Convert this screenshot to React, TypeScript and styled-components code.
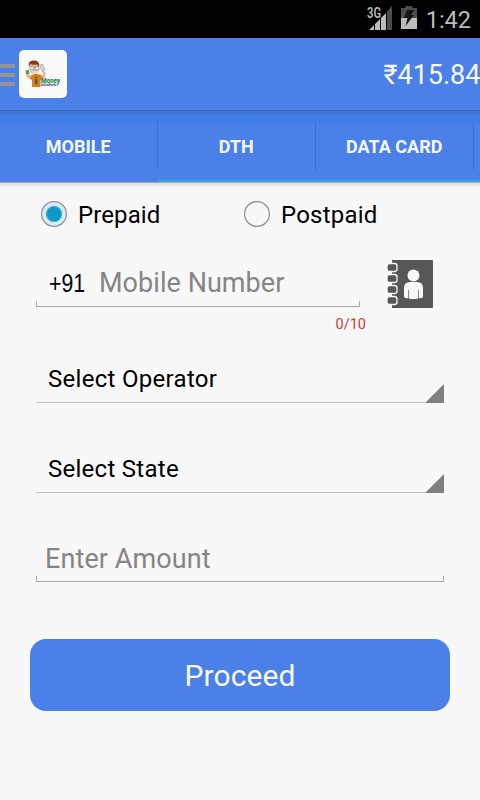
import React, { useState } from 'react';
import styled, { createGlobalStyle } from 'styled-components';

const BLUE = '#4a80e8';

const GlobalStyle = createGlobalStyle`
  * { box-sizing: border-box; }
  body { margin: 0; background: #f8f8f8; font-family: Roboto, "Noto Sans", sans-serif; }
  button { font-family: inherit; border: 0; padding: 0; background: none; text-align: left; }
`;

const Screen = styled.div`
  width: 480px;
  height: 800px;
  overflow: hidden;
  display: flex;
  flex-direction: column;
  background: #f8f8f8;
`;

const StatusBar = styled.header`
  height: 38px;
  flex: none;
  background: #000;
  display: flex;
  justify-content: flex-end;
  padding: 6px 9px 0 0;
`;

const StatusIcons = styled.svg`
  display: block;
  margin-right: 8px;
`;

const Label = styled.span<{ $size: number; $spacing?: number; $weight?: number; $color?: string }>`
  display: block;
  white-space: nowrap;
  line-height: 1.2;
  font-size: ${(p) => p.$size}px;
  letter-spacing: ${(p) => p.$spacing ?? 0}px;
  font-weight: ${(p) => p.$weight ?? 400};
  color: ${(p) => p.$color ?? '#000'};
`;

const AppBar = styled.div`
  height: 72px;
  flex: none;
  display: flex;
  align-items: center;
  background: ${BLUE};
`;

const Menu = styled.button`
  width: 15px;
  height: 22px;
  margin: 2px 4px 0 0;
  display: flex;
  flex-direction: column;
  justify-content: space-between;
`;

const MenuLine = styled.i`
  display: block;
  width: 15px;
  height: 4px;
  background: #969390;
`;

const LogoTile = styled.div`
  width: 48px;
  height: 48px;
  border-radius: 5px;
  background: #f9f9f9;
`;

const Balance = styled.div`
  width: 96.5px;
  margin-left: auto;
  padding-top: 3px;
`;

const Tabs = styled.nav`
  height: 72px;
  flex: none;
  display: flex;
  overflow: hidden;
  border-top: 1px solid #3767b6;
  background: linear-gradient(#4075cf 0, #427bdc 4px, #3f80e8 6px, #3f80e8 12px, ${BLUE} 13px);
`;

const Tab = styled.button<{ $active: boolean }>`
  width: 158px;
  flex: none;
  display: flex;
  align-items: center;
  justify-content: center;
  border-bottom: 2px solid ${(p) => (p.$active ? 'transparent' : '#33aadd')};
  background: linear-gradient(#3d70d0, #3d70d0) right 0 top 11px / 1px 48px no-repeat;
  padding: 2px 1.5px 0 0;
`;

const TabsShadow = styled.div`
  height: 5px;
  flex: none;
  background: linear-gradient(#a9abae 0, #a9abae 1px, #dedede 1px, #ededed 4px, #f3f3f3 5px);
`;

const Form = styled.form`
  display: flex;
  flex-direction: column;
  padding: 0 30px 0 36px;
`;

const Radios = styled.div`
  display: grid;
  grid-template-columns: 203px 1fr;
  height: 28px;
  margin: 13px 0 0 4px;
`;

const Radio = styled.button`
  display: flex;
  align-items: flex-start;
`;

const RadioMark = styled.svg`
  margin-right: 10px;
`;

const RadioText = styled.span`
  padding-top: 1px;
`;

const MobileRow = styled.div`
  display: flex;
  margin-top: 28px;
`;

const Field = styled.div<{ $width: number; $left: number; $top: number }>`
  width: ${(p) => p.$width}px;
  height: 51px;
  padding: ${(p) => p.$top}px 0 0 ${(p) => p.$left}px;
  display: flex;
  background:
    linear-gradient(#aaa, #aaa) left bottom / 1px 6px no-repeat,
    linear-gradient(#aaa, #aaa) right bottom / 1px 6px no-repeat,
    linear-gradient(#aaa, #aaa) left bottom / 100% 1px no-repeat;
`;

const Prefix = styled.span`
  width: 50px;
  flex: none;
  font: 25px/32px "Liberation Sans", Arial, sans-serif;
  color: #000;
  transform: scaleX(0.85);
  transform-origin: left;
`;

const ContactIcon = styled.svg`
  margin: 3px 0 0 26px;
`;

const Counter = styled.div`
  height: 18px;
  margin: 7px 84px 0 0;
  display: flex;
  justify-content: flex-end;
`;

const Spinner = styled.button<{ $gap: number }>`
  width: 408px;
  height: 48px;
  margin-top: ${(p) => p.$gap}px;
  padding: 10px 0 0 12px;
  display: flex;
  border-bottom: 1px solid #c2c2c2;
  justify-content: space-between;
`;

const Corner = styled.svg`
  margin-top: 19px;
  overflow: visible;
`;

const AmountRow = styled.div`
  margin-top: 38px;
`;

const Proceed = styled.button`
  width: 420px;
  height: 72px;
  margin: 57px 0 0 -6px;
  padding-top: 1px;
  border-radius: 16px;
  background: ${BLUE};
  display: flex;
  align-items: center;
  justify-content: center;
`;

const LogoText = styled.text`
  font-family: Roboto, sans-serif;
  font-weight: 800;
`;

function StatusGlyphs() {
  return (
    <StatusIcons width="51" height="26" viewBox="0 0 51 26">
      <path d="M20 5.500 25 0v24h-5z" fill="#4c4c4c" />
      <path d="M2 24 7 19v5zM8 18l5-5v11H8zM14 12l5-5v17h-5z" fill="#bcbcbc" />
      <text x="0" y="11.500" fontFamily="Roboto, sans-serif" fontSize="14.500" fontWeight="600" fill="#bcbcbc" stroke="#000" strokeWidth="1" paintOrder="stroke" textLength="14" lengthAdjust="spacingAndGlyphs">3G</text>
      <path d="M38.500 0h7v2H50v11H34V2h4.500z" fill="#4c4c4c" />
      <path d="M34 12h16v11H34z" fill="#bcbcbc" />
      <path d="M40 4h7l-3 5h3l-8.500 11 2-8H37z" fill="#161616" />
    </StatusIcons>
  );
}

function Logo() {
  return (
    <svg width="48" height="48" viewBox="0 0 48 48">
      <path d="M7 24c0 3 2 5 5 5l2-3-4-1-1-2zM22.500 21l2 3-3 3 1 3c3-1 4-4 4-7l-2-3z" fill="#e8b48f" />
      <path d="M12 26c2-2.500 7-2.500 10-1l1.500 3-2 2.500V37H13v-7l-2-1z" fill="#e27a18" />
      <ellipse cx="15.300" cy="18" rx="4.600" ry="6" fill="#eabd9e" />
      <path d="M10.200 16.500c-1.500-4 1-6 4.500-6 4 0 6.500 2 5.300 6.500l-1.500-2.500c-3 .5-6 .2-7-.2z" fill="#8b3b20" />
      <path d="M11 16.500h3.800V20H11zM16 16.500h3.800V20H16z" fill="#dce9ec" stroke="#8a8684" strokeWidth=".7" />
      <path d="M13.300 21.500q2 1.800 4 0" fill="none" stroke="#fff" />
      <path d="m6.500 20.500 3.500-.7.5 4-3.500.7z" fill="#6f963d" />
      <path d="m20.800 15.200 3-1 2 5.500-3 1z" fill="#d9dedf" stroke="#8d8d8d" strokeWidth=".6" />
      <path d="M16 29h2.300v5.500H16zM16 26.500h2.300v1.700H16z" fill="#187c3b" />
      <LogoText x="22" y="32.500" fontSize="6.800" textLength="19" lengthAdjust="spacingAndGlyphs" fill="#168044">Money</LogoText>
      <LogoText x="22" y="36" fontSize="2.600" textLength="17" lengthAdjust="spacingAndGlyphs" fill="#35327b">Add And Benefits..!</LogoText>
    </svg>
  );
}

function RadioOption({ label, checked, spacing, onSelect }: { label: string; checked: boolean; spacing: number; onSelect: () => void }) {
  return (
    <Radio type="button" role="radio" aria-checked={checked} onClick={onSelect}>
      <RadioMark width="28" height="28" viewBox="0 0 28 28">
        {checked && <circle cx="14" cy="14" r="11.500" fill="#d2edf8" />}
        <circle cx="14" cy="14" r="12.400" fill="none" stroke="#8b8b8b" strokeWidth="1.200" />
        {checked && <circle cx="14" cy="14" r="7.500" fill="#0b99cd" stroke="#4e9dbb" strokeWidth="1.200" />}
      </RadioMark>
      <RadioText><Label $size={24} $spacing={spacing}>{label}</Label></RadioText>
    </Radio>
  );
}

function Contact() {
  return (
    <ContactIcon width="48" height="50" viewBox="0 0 48 50">
      <path d="M6 1h40q1 0 1 1v46q0 1-1 1H6z" fill="#575757" />
      {[4.5, 15.5, 26.5, 37.5].map((y) => (
        <rect key={y} x="1" y={y} width="10" height="8" rx="2.500" fill="#575757" stroke="#f8f8f8" strokeWidth="1.300" />
      ))}
      <circle cx="27.500" cy="16.500" r="6" fill="#f8f8f8" />
      <path d="M18 38v-9q0-6 6-6h7q6 0 6 6v9q-2 2-4 1v-8h-.7v8.500q-4.800 1-9.600 0V31H22v8q-2 1-4-1z" fill="#f8f8f8" />
    </ContactIcon>
  );
}

function Select({ label, gap, spacing }: { label: string; gap: number; spacing: number }) {
  return (
    <Spinner type="button" $gap={gap}>
      <Label $size={24} $spacing={spacing}>{label}</Label>
      <Corner width="18" height="19" viewBox="0 0 18 19">
        <path d="M18 0v19H0v-1z" fill="#808080" />
      </Corner>
    </Spinner>
  );
}

const tabs = ['MOBILE', 'DTH', 'DATA CARD', ''];

export default function App() {
  const [plan, setPlan] = useState('Prepaid');
  const [tab, setTab] = useState(0);
  return (
    <Screen>
      <GlobalStyle />
      <StatusBar>
        <StatusGlyphs />
        <Label $size={23.5} $color="#bcbcbc">1:42</Label>
      </StatusBar>
      <AppBar>
        <Menu aria-label="Menu"><MenuLine /><MenuLine /><MenuLine /></Menu>
        <LogoTile><Logo /></LogoTile>
        <Balance><Label $size={27} $color="#f8f8f8">₹415.84</Label></Balance>
      </AppBar>
      <Tabs>
        {tabs.map((label, i) => (
          <Tab key={i} $active={i === tab} onClick={() => setTab(i)}>
            <Label $size={18} $weight={700} $color="#f4f7fd">{label}</Label>
          </Tab>
        ))}
      </Tabs>
      <TabsShadow />
      <Form>
        <Radios role="radiogroup">
          <RadioOption label="Prepaid" spacing={0.1} checked={plan === 'Prepaid'} onSelect={() => setPlan('Prepaid')} />
          <RadioOption label="Postpaid" spacing={0.2} checked={plan === 'Postpaid'} onSelect={() => setPlan('Postpaid')} />
        </Radios>
        <MobileRow>
          <Field $width={324} $left={13} $top={11}>
            <Prefix>+91</Prefix>
            <Label $size={27} $spacing={0.05} $color="#858585">Mobile Number</Label>
          </Field>
          <Contact />
        </MobileRow>
        <Counter><Label $size={14.5} $color="#cc3b32">0/10</Label></Counter>
        <Select label="Select Operator" gap={21} spacing={0.3} />
        <Select label="Select State" gap={42} spacing={0.27} />
        <AmountRow>
          <Field $width={408} $left={9} $top={12}><Label $size={27} $spacing={0.1} $color="#858585">Enter Amount</Label></Field>
        </AmountRow>
        <Proceed type="button"><Label $size={30} $spacing={0.07} $color="#f8f8f8">Proceed</Label></Proceed>
      </Form>
    </Screen>
  );
}
